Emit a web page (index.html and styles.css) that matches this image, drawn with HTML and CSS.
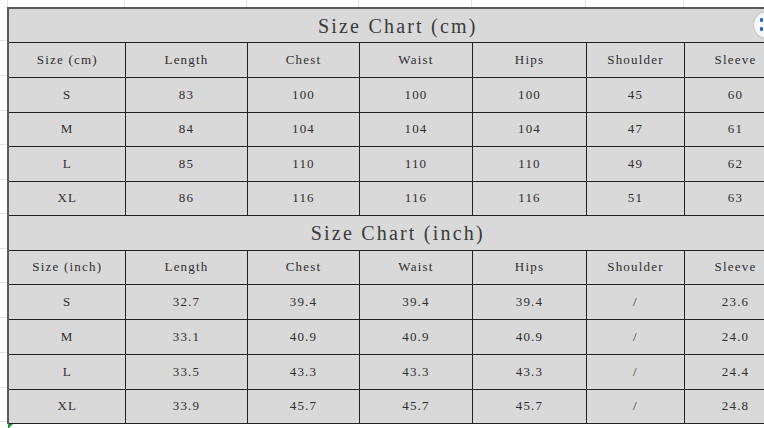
FILE: index.html
```html
<!DOCTYPE html>
<html>
<head>
<meta charset="utf-8">
<link rel="stylesheet" href="styles.css">
</head>
<body>
<div class="sheet">
  <div class="topstrip">
    <div class="g g0"></div><div class="g c1"></div><div class="g c2"></div><div class="g c3"></div><div class="g c4"></div><div class="g c5"></div><div class="g c6"></div><div class="g c7"></div>
  </div>
  <div class="main">
    <div class="leftstrip">
      <div class="r h34"></div><div class="r h35"></div><div class="r h35"></div><div class="r h34"></div><div class="r h35"></div><div class="r h34"></div><div class="r h35"></div><div class="r h34"></div><div class="r h35"></div><div class="r h35"></div><div class="r h35"></div><div class="r h34"></div>
    </div>
    <table class="chart">
      <colgroup>
        <col class="c1"><col class="c2"><col class="c3"><col class="c4"><col class="c5"><col class="c6"><col class="c7">
      </colgroup>
      <tr class="h34"><td class="title" colspan="7">Size Chart (cm)</td></tr>
      <tr class="h35"><td>Size (cm)</td><td>Length</td><td>Chest</td><td>Waist</td><td>Hips</td><td>Shoulder</td><td>Sleeve</td></tr>
      <tr class="h35"><td>S</td><td>83</td><td>100</td><td>100</td><td>100</td><td>45</td><td>60</td></tr>
      <tr class="h34"><td>M</td><td>84</td><td>104</td><td>104</td><td>104</td><td>47</td><td>61</td></tr>
      <tr class="h35"><td>L</td><td>85</td><td>110</td><td>110</td><td>110</td><td>49</td><td>62</td></tr>
      <tr class="h34"><td>XL</td><td>86</td><td>116</td><td>116</td><td>116</td><td>51</td><td>63</td></tr>
      <tr class="h35"><td class="title" colspan="7">Size Chart (inch)</td></tr>
      <tr class="h34"><td>Size (inch)</td><td>Length</td><td>Chest</td><td>Waist</td><td>Hips</td><td>Shoulder</td><td>Sleeve</td></tr>
      <tr class="h35"><td>S</td><td>32.7</td><td>39.4</td><td>39.4</td><td>39.4</td><td>/</td><td>23.6</td></tr>
      <tr class="h35"><td>M</td><td>33.1</td><td>40.9</td><td>40.9</td><td>40.9</td><td>/</td><td>24.0</td></tr>
      <tr class="h35"><td>L</td><td>33.5</td><td>43.3</td><td>43.3</td><td>43.3</td><td>/</td><td>24.4</td></tr>
      <tr class="h34"><td>XL</td><td>33.9</td><td>45.7</td><td>45.7</td><td>45.7</td><td>/</td><td>24.8</td></tr>
    </table>
  </div>
  <div class="bottom"><span class="tri"></span></div>
  <div class="fab"><span class="dot d1"></span><span class="dot d2"></span></div>
</div>
</body>
</html>
```

FILE: styles.css
```css
html, body {
  margin: 0;
  padding: 0;
  background: #fff;
  overflow: hidden;
  width: 764px;
  height: 428px;
}
.sheet {
  position: relative;
  width: 764px;
  height: 428px;
  overflow: hidden;
}
.topstrip {
  display: flex;
  height: 7px;
}
.topstrip .g {
  flex: none;
  box-sizing: border-box;
  border-right: 1px solid #e4e4e4;
  height: 7px;
}
.topstrip .g0 { width: 8px; }
.topstrip .c1 { width: 117px; }
.topstrip .c2 { width: 122px; }
.topstrip .c3 { width: 112px; }
.topstrip .c4 { width: 113px; }
.topstrip .c5 { width: 114px; }
.topstrip .c6 { width: 98px; }
.topstrip .c7 { width: 102px; }
.main {
  display: flex;
  align-items: flex-start;
}
.leftstrip {
  flex: none;
  width: 7px;
  display: flex;
  flex-direction: column;
}
.leftstrip .r {
  box-sizing: border-box;
  border-bottom: 1px solid #e4e4e4;
}
.leftstrip .h34 { height: 34px; }
.leftstrip .h35 { height: 35px; }
.chart {
  flex: none;
  border-collapse: collapse;
  table-layout: fixed;
  width: 779px;
  background: #d9d9d9;
  border-left: 2px solid #5a5a5a;
  border-top: 2px solid #5a5a5a;
  font-family: "Liberation Serif", "Noto Sans CJK SC", serif;
  font-size: 13px;
  letter-spacing: 1.2px;
  color: #2e2e2e;
}
.chart col.c1 { width: 117px; }
.chart col.c2 { width: 122px; }
.chart col.c3 { width: 112px; }
.chart col.c4 { width: 113px; }
.chart col.c5 { width: 114px; }
.chart col.c6 { width: 98px; }
.chart col.c7 { width: 102px; }
.chart tr.h34 { height: 34px; }
.chart tr.h35 { height: 35px; }
.chart td {
  border: 1px solid #222;
  text-align: center;
  vertical-align: middle;
  padding: 0 0 0 1px;
  white-space: nowrap;
}
.chart td.title {
  font-size: 20px;
  letter-spacing: 2.2px;
  color: #3a3a3a;
  padding-top: 2px;
}
.bottom {
  height: 6px;
  padding-left: 8px;
}
.tri {
  display: block;
  width: 0;
  height: 0;
  border-top: 5px solid #1e9a3a;
  border-right: 5px solid transparent;
}
.fab {
  position: absolute;
  left: 754px;
  top: 12px;
  width: 26px;
  height: 26px;
  border-radius: 50%;
  background: #f7f7f7;
  box-shadow: 0 0 2px rgba(0,0,0,0.25);
}
.fab .dot {
  position: absolute;
  left: 6px;
  width: 3px;
  height: 4px;
  border-radius: 1px;
  background: #1f6fd1;
}
.fab .d1 { top: 6px; }
.fab .d2 { top: 15px; }
```
